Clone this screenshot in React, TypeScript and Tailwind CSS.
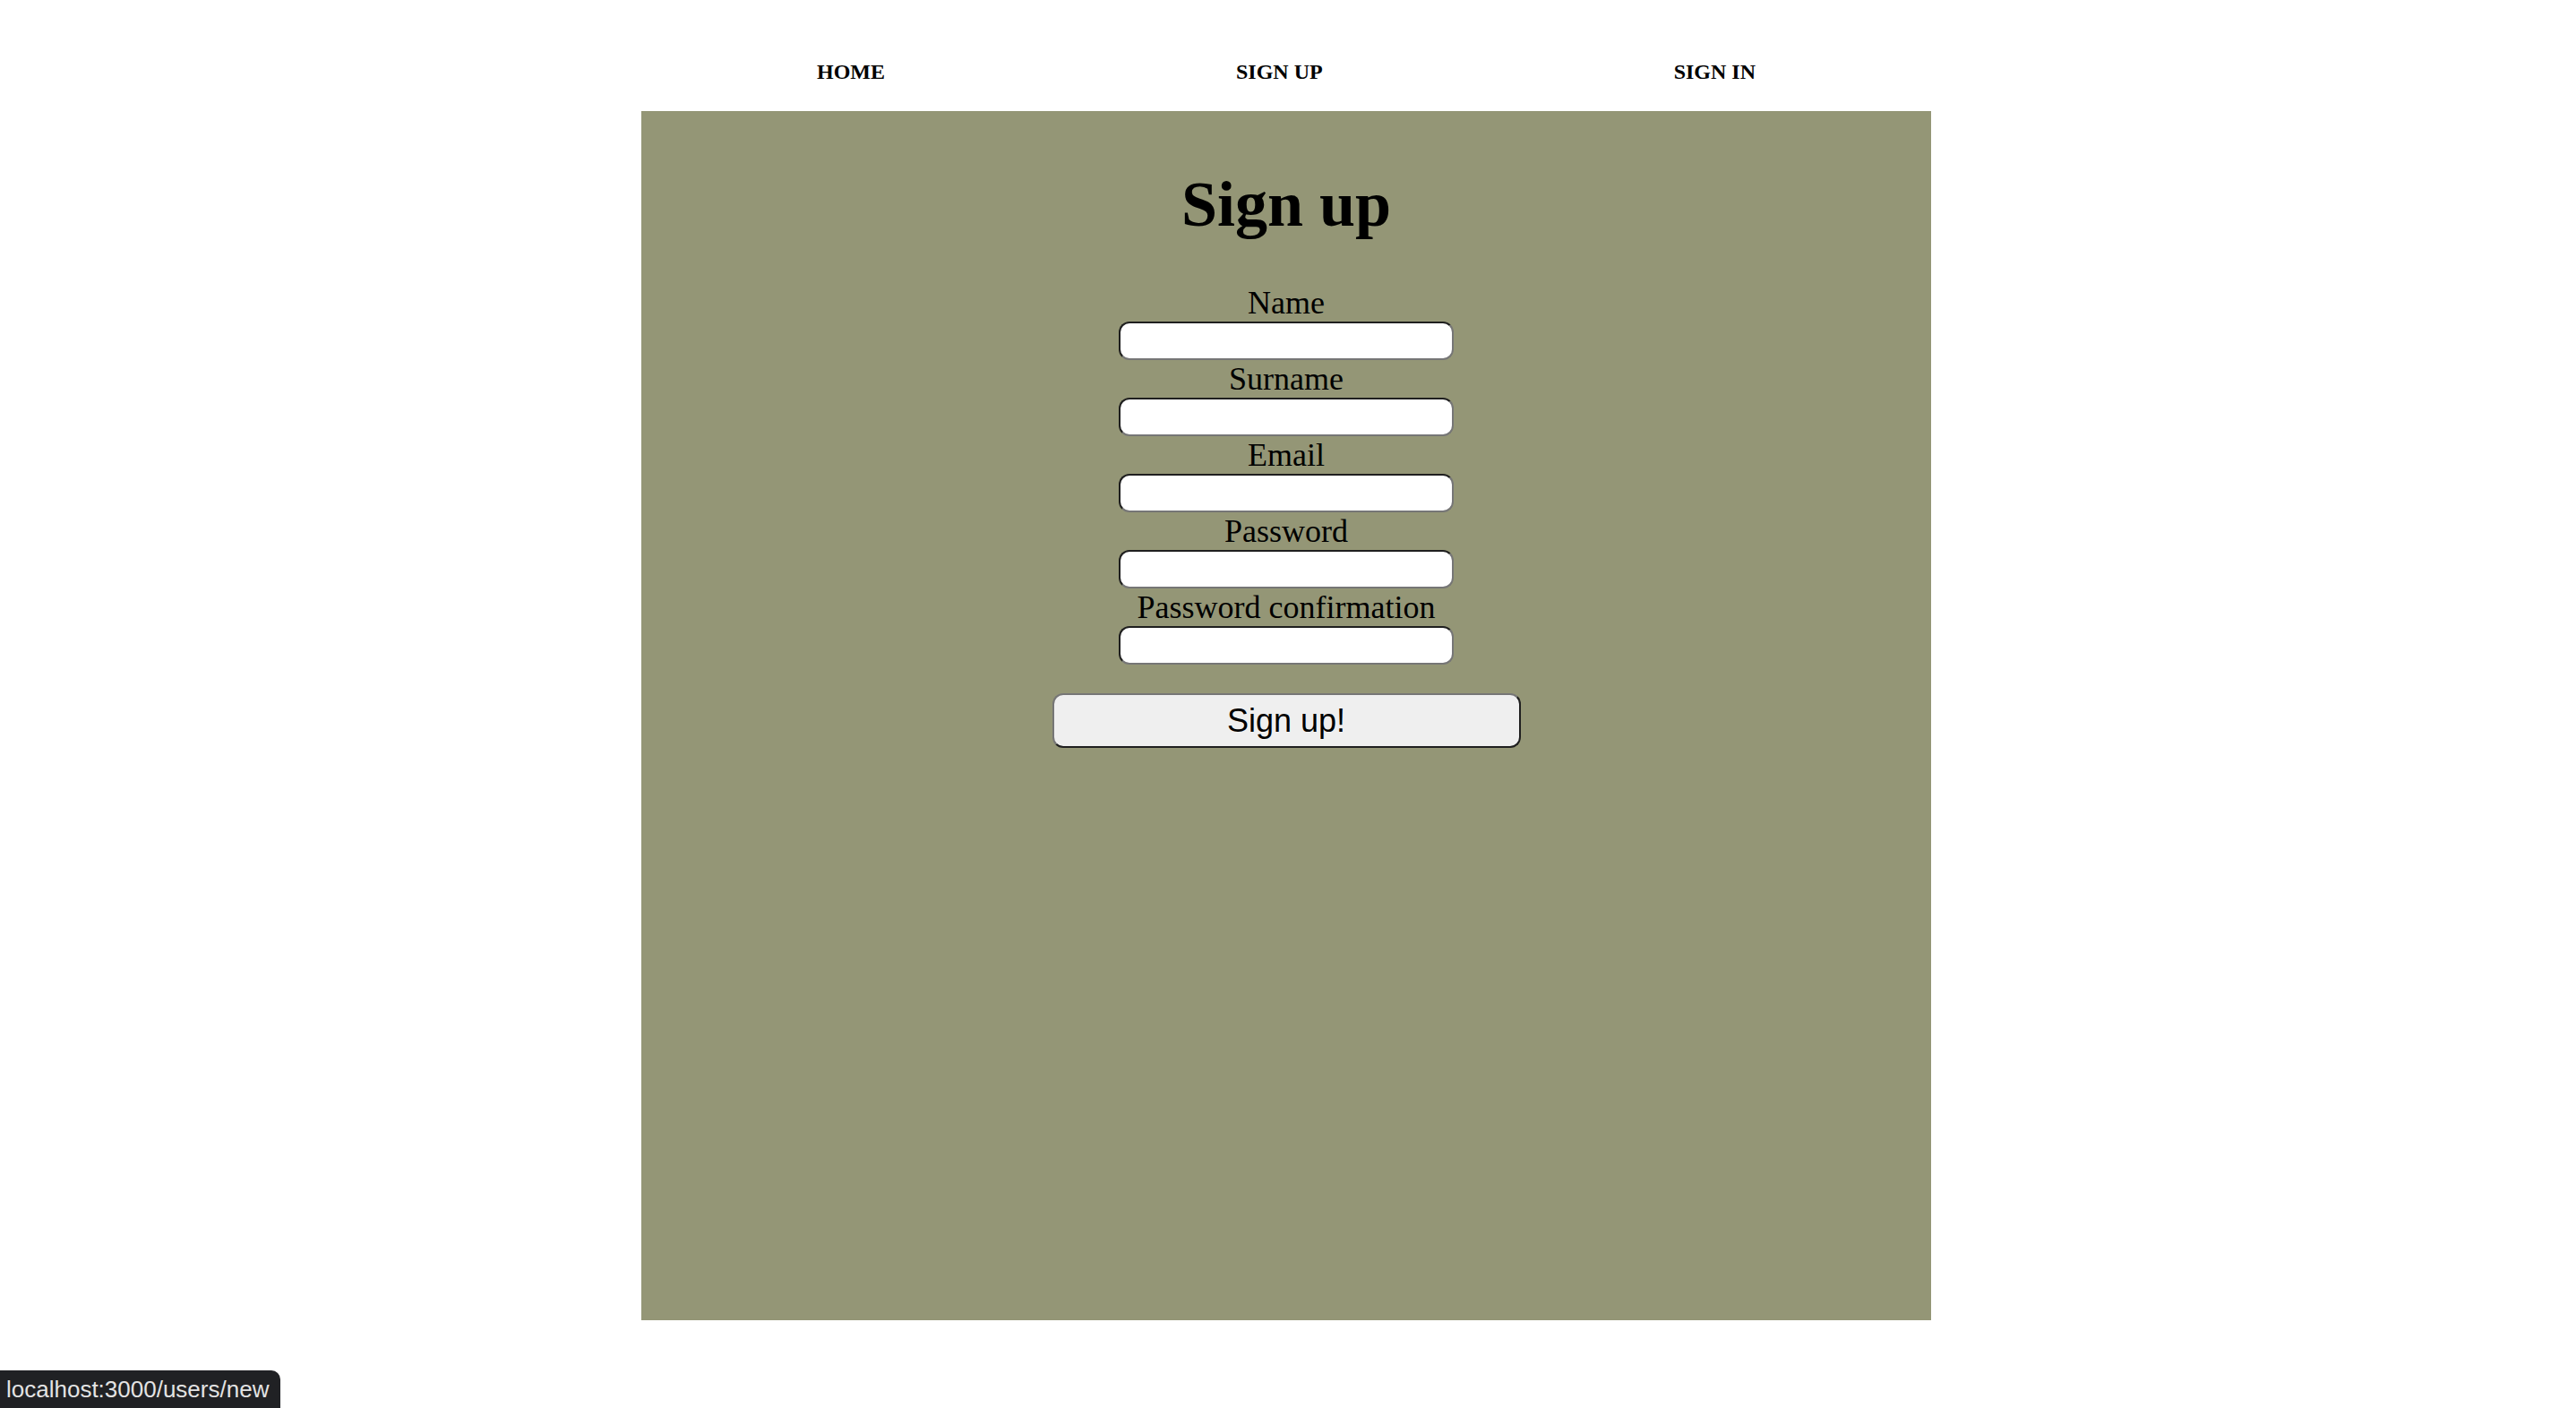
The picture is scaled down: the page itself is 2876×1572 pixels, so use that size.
import React from "react";

const serif = { fontFamily: '"Liberation Serif", "Times New Roman", serif' };

function Field({ label }: { label: string }) {
  return (
    <div className="flex flex-col items-center">
      <label className="text-[36px] leading-[42px] text-black" style={serif}>
        {label}
      </label>
      <input
        type="text"
        className="h-[43px] w-[374px] rounded-[12px] border-2 border-t-[#1f1f1f] border-l-[#1f1f1f] border-b-[#767676] border-r-[#767676] bg-white outline-none"
      />
    </div>
  );
}

export default function App() {
  return (
    <div className="relative min-h-screen bg-white" style={serif}>
      <nav className="ml-[716px] flex h-[124px] w-[1440px] justify-around pt-[66px]">
        {["HOME", "SIGN UP", "SIGN IN"].map((t) => (
          <a key={t} className="text-[24px] font-bold leading-[28px] text-black">
            {t}
          </a>
        ))}
      </nav>
      <main className="ml-[716px] flex h-[1350px] w-[1440px] flex-col items-center bg-[#949676] pt-[63px]">
        <h1 className="mb-[47px] text-[72px] font-bold leading-[83px] text-black">Sign up</h1>
        <Field label="Name" />
        <Field label="Surname" />
        <Field label="Email" />
        <Field label="Password" />
        <Field label="Password confirmation" />
        <button
          className="mt-[32px] h-[61px] w-[523px] rounded-[12px] border-2 border-t-[#767676] border-l-[#767676] border-b-[#1f1f1f] border-r-[#1f1f1f] bg-[#efefef] text-[36px] leading-[40px] text-black"
          style={{ fontFamily: '"Liberation Sans", Arial, sans-serif' }}
        >
          Sign up!
        </button>
      </main>
      <div
        className="fixed bottom-0 left-0 flex h-[42px] w-[313px] items-center rounded-tr-[10px] bg-[#202124] pl-[7px] text-[26px] text-[#e3e3e3]"
        style={{ fontFamily: '"Liberation Sans", Arial, sans-serif' }}
      >
        localhost:3000/users/new
      </div>
    </div>
  );
}
